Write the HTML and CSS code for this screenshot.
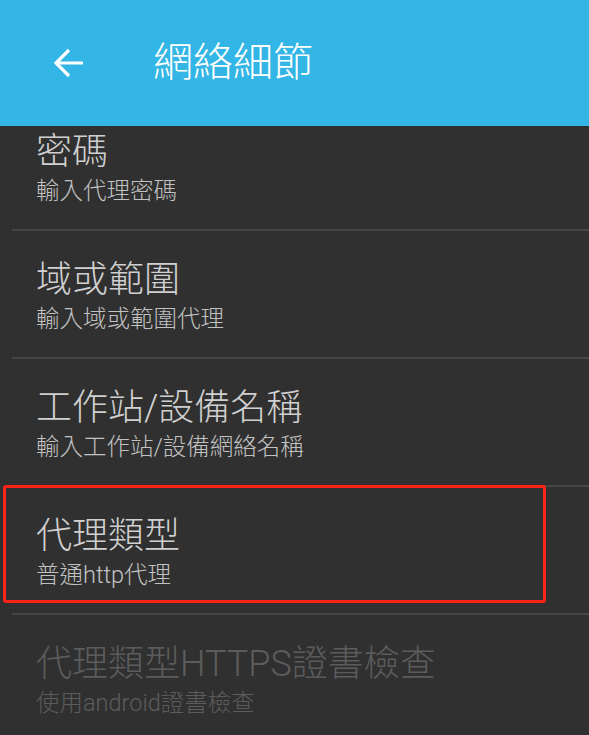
FILE: index.html
```html
<!DOCTYPE html>
<html>
<head>
<title>網絡細節</title>
<link rel="stylesheet" href="styles.css">
</head>
<body>

  <div class="action-bar">
    <a class="up" href="#">
      <svg width="32" height="32" viewBox="0 0 32 32"><path d="M31 16H4M17 3L4 16l13 13" fill="none" stroke="#fff" stroke-width="3.2"/></svg>
    </a>
    <h1>網絡細節</h1>
  </div>

  <ul class="prefs">
    <li class="pref first">
      <div class="pref-title">密碼</div>
      <div class="pref-summary">輸入代理密碼</div>
    </li>
    <li class="pref">
      <div class="pref-title">域或範圍</div>
      <div class="pref-summary">輸入域或範圍代理</div>
    </li>
    <li class="pref">
      <div class="pref-title">工作站/設備名稱</div>
      <div class="pref-summary">輸入工作站/設備網絡名稱</div>
    </li>
    <li class="pref marked">
      <div class="pref-title">代理類型</div>
      <div class="pref-summary">普通http代理</div>
      <div class="mark"></div>
    </li>
    <li class="pref disabled">
      <div class="pref-title">代理類型HTTPS證書檢查</div>
      <div class="pref-summary">使用android證書檢查</div>
    </li>
  </ul>

</body>
</html>
```

FILE: styles.css
```css
html, body {margin: 0; padding: 0; height: 100%;}
body {background: #303030; font-family: Roboto, "Noto Sans CJK TC", sans-serif; font-weight: 300; overflow: hidden;}

.action-bar {height: 126px; background: #33b5e5; display: flex; align-items: center; padding-left: 52px;}
.action-bar .up {display: block; width: 32px; height: 32px; margin-top: -1px;}
.action-bar .up svg {display: block;}
.action-bar h1 {margin: 0 0 0 69px; font-size: 40px; font-weight: 300; color: #fff; line-height: 44px;}

.prefs {list-style: none; margin: 0; padding: 0;}
.pref {position: relative; margin-left: 12px; padding: 28px 0 24px 24px; border-bottom: 2px solid #464646;}
.pref.first {padding-top: 5px;}
.pref-title {font-size: 36px; line-height: 42px; color: #d0d0d0; white-space: nowrap;}
.pref-summary {font-size: 23.5px; line-height: 28px; margin-top: 4px; color: #c2c2c2; white-space: nowrap;}
.pref.disabled .pref-title, .pref.disabled .pref-summary {color: #5c5c5c;}

.mark {position: absolute; left: -9px; top: -2px; width: 543px; height: 118px; box-sizing: border-box; border: 3px solid #ff2418; border-radius: 3px;}
```
